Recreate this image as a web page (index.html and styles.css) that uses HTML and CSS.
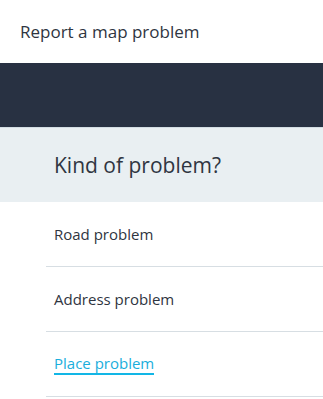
FILE: index.html
```html
<!DOCTYPE html>
<html>
<head>
<meta charset="utf-8">
<link rel="stylesheet" href="styles.css">
</head>
<body>
<header class="top">Report a map problem</header>
<div class="band"></div>
<div class="question"><h1>Kind of problem?</h1></div>
<ul class="kinds">
  <li>Road problem</li>
  <li>Address problem</li>
  <li><a href="#" class="link">Place problem</a></li>
</ul>
</body>
</html>
```
FILE: styles.css
```css
html, body { margin: 0; padding: 0; background: #fff; }
body { font-family: "Open Sans", "Noto Sans", sans-serif; color: #2f3541; width: 323px; height: 399px; overflow: hidden; }
.top { height: 63px; display: flex; align-items: center; padding-left: 20px; font-size: 17px; box-sizing: border-box; padding-bottom: 1px; }
.band { height: 64px; background: #283142; border-bottom: 1px solid #d3dde3; }
.question { height: 74px; background: #e9eff2; display: flex; align-items: center; padding-left: 54px; }
.question h1 { margin: 0; font-weight: 400; font-size: 21px; color: #2f3541; }
.kinds { list-style: none; margin: 0 0 0 46px; padding: 0; }
.kinds li { height: 64px; border-bottom: 1px solid #d7dee3; display: flex; align-items: center; padding-left: 8px; font-size: 15px; }
.link { color: #1aaedc; text-decoration: none; border-bottom: 2px solid #12b6e6; line-height: 19px; }
```
